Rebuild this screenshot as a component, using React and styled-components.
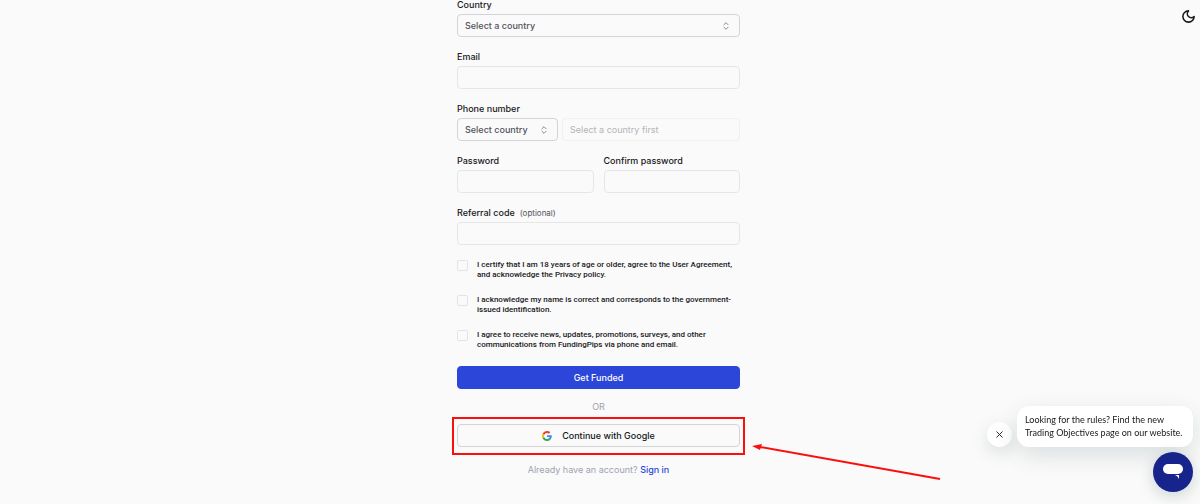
import React, { useState } from 'react';
import styled, { createGlobalStyle } from 'styled-components';
import { ChevronsUpDown, X } from 'lucide-react';

const GlobalStyle = createGlobalStyle`
  * {
    box-sizing: border-box;
  }

  body {
    margin: 0;
    background-color: #fafafa;
    color: #18181b;
    font-family: 'Inter', sans-serif;
    font-size: 9px;
  }

  button,
  input,
  select {
    margin: 0;
    font-family: inherit;
    font-size: inherit;
  }
`;

const Page = styled.main`
  display: flex;
  justify-content: center;
  min-height: 100vh;
  padding-right: 3px;
  overflow: hidden;
`;

const Form = styled.form`
  display: flex;
  flex-direction: column;
  width: 100%;
  max-width: 283px;
`;

const Fields = styled.div`
  display: flex;
  flex-direction: column;
  gap: 15px;
  margin-bottom: 16px;
`;

const Field = styled.div`
  display: flex;
  flex-direction: column;
  gap: 5px;
  min-width: 0;
`;

const Columns = styled.div`
  display: grid;
  grid-template-columns: 1fr 1fr;
  gap: 10px;
`;

const PhoneRow = styled.div`
  display: grid;
  grid-template-columns: 101px 1fr;
  gap: 4px;
`;

const Label = styled.label`
  line-height: 9px;
  font-weight: 500;
`;

const Optional = styled.span`
  margin-left: 5px;
  font-size: 8px;
  line-height: 8px;
  font-weight: 400;
  color: #52525b;
`;

const Input = styled.input`
  width: 100%;
  height: 23px;
  padding: 0 7px;
  border: 1px solid #e6e6e8;
  border-radius: 4px;
  background-color: transparent;

  &:disabled {
    border-color: #f0f0f1;
  }

  &::placeholder {
    color: #b4b4b8;
    opacity: 1;
  }
`;

const SelectBox = styled.div`
  display: grid;
  align-items: center;

  & > * {
    grid-area: 1 / 1;
  }

  svg {
    justify-self: end;
    margin-right: 9px;
    color: #71717a;
    pointer-events: none;
  }
`;

const Select = styled.select`
  width: 100%;
  height: 23px;
  padding: 0 20px 0 7px;
  border: 1px solid #d4d4d8;
  border-radius: 4px;
  background-color: transparent;
  color: #52525b;
  font-weight: 500;
  appearance: none;
`;

const CheckRow = styled.label`
  display: flex;
  align-items: flex-start;
  gap: 9px;
  font-family: 'Roboto', sans-serif;
  font-size: 8px;
  line-height: 10px;
  font-weight: 500;
`;

const Checkbox = styled.input`
  flex: none;
  width: 11px;
  height: 11px;
  border: 1px solid #e4e4e7;
  border-radius: 2px;
  appearance: none;

  &:checked {
    background-color: #2b46d9;
  }
`;

const Button = styled.button`
  display: flex;
  align-items: center;
  justify-content: center;
  gap: 10px;
  width: 100%;
  height: 23px;
  padding: 0;
  border: 1px solid ${({ $primary }) => ($primary ? '#2b46d9' : '#d4d4d8')};
  border-radius: 4px;
  background-color: ${({ $primary }) => ($primary ? '#2b46d9' : 'transparent')};
  color: ${({ $primary }) => ($primary ? '#ffffff' : '#18181b')};
  font-weight: 500;
  cursor: pointer;
`;

const Or = styled.p`
  margin: 12px 0;
  line-height: 11px;
  text-align: center;
  color: #a1a1aa;
`;

const GoogleArea = styled.div`
  position: relative;
`;

const Highlight = styled.div`
  position: absolute;
  inset: -7px -5px -8px;
  border: 2px solid #fa0f0f;
  pointer-events: none;
`;

const Arrow = styled.svg`
  position: absolute;
  top: 16px;
  left: calc(100% + 12px);
  pointer-events: none;
`;

const SignIn = styled.p`
  margin: 17px 0 0;
  line-height: 11px;
  text-align: center;
  color: #9ca3af;

  a {
    color: #2b46d9;
    font-weight: 500;
    text-decoration: none;
  }
`;

const ThemeButton = styled.button`
  position: fixed;
  top: 9px;
  right: 4px;
  display: flex;
  padding: 0;
  border: none;
  background: none;
  color: #18181b;
`;

const Chat = styled.aside`
  position: fixed;
  right: 7px;
  bottom: 12px;
  display: flex;
  flex-direction: column;
  align-items: flex-end;
  gap: 5px;
`;

const ChatRow = styled.div`
  display: flex;
  align-items: flex-end;
  gap: 5px;
`;

const Bubble = styled.p`
  margin: 0;
  width: 176px;
  padding: 7px 8px 8px;
  border-radius: 12px;
  background-color: #ffffff;
  box-shadow: 0 8px 24px rgba(20, 60, 60, 0.14);
  font-family: 'Lato', sans-serif;
  font-size: 9px;
  line-height: 13px;
  white-space: nowrap;
`;

const CloseButton = styled.button`
  display: flex;
  align-items: center;
  justify-content: center;
  width: 25px;
  height: 25px;
  padding: 0;
  border: none;
  border-radius: 50%;
  background-color: #ffffff;
  box-shadow: 0 6px 18px rgba(20, 60, 60, 0.14);
  color: #18181b;
`;

const ChatButton = styled.button`
  display: flex;
  align-items: center;
  justify-content: center;
  width: 40px;
  height: 40px;
  padding: 0;
  border: none;
  border-radius: 50%;
  background-color: #17248c;
  box-shadow: 0 4px 16px rgba(20, 60, 60, 0.2);
`;

const agreements = [
  'I certify that I am 18 years of age or older, agree to the User Agreement, and acknowledge the Privacy policy.',
  'I acknowledge my name is correct and corresponds to the government-issued identification.',
  'I agree to receive news, updates, promotions, surveys, and other communications from FundingPips via phone and email.',
];

const GoogleLogo = () => (
  <svg width="10" height="10" viewBox="0 0 48 48" aria-hidden="true">
    <path fill="#EA4335" d="M24 9.5c3.54 0 6.71 1.22 9.21 3.6l6.85-6.85C35.9 2.38 30.47 0 24 0 14.62 0 6.51 5.38 2.56 13.22l7.98 6.19C12.43 13.72 17.74 9.5 24 9.5z" />
    <path fill="#4285F4" d="M46.98 24.55c0-1.57-.15-3.09-.38-4.55H24v9.02h12.94c-.58 2.96-2.26 5.48-4.78 7.18l7.73 6c4.51-4.18 7.09-10.36 7.09-17.65z" />
    <path fill="#FBBC05" d="M10.53 28.59A14.5 14.5 0 0 1 9.77 24c0-1.6.27-3.14.76-4.59l-7.98-6.19A23.9 23.9 0 0 0 0 24c0 3.88.92 7.54 2.56 10.78l7.97-6.19z" />
    <path fill="#34A853" d="M24 48c6.48 0 11.93-2.13 15.89-5.81l-7.73-6c-2.15 1.45-4.92 2.3-8.16 2.3-6.26 0-11.57-4.22-13.47-9.91l-7.98 6.19C6.51 42.62 14.62 48 24 48z" />
  </svg>
);

const MoonIcon = () => (
  <svg width="15" height="15" viewBox="0 0 24 24" fill="none" stroke="currentColor" strokeWidth="2.5" strokeLinejoin="round" aria-hidden="true">
    <path d="M12 3a6 6 0 0 0 9 9 9 9 0 1 1-9-9Z" />
  </svg>
);

const App = () => {
  const [dialogOpen, setDialogOpen] = useState(true);

  return (
    <>
      <GlobalStyle />
      <Page>
        <Form onSubmit={(e) => e.preventDefault()}>
          <Fields>
            <Field>
              <Label htmlFor="country">Country</Label>
              <SelectBox>
                <Select id="country" name="country">
                  <option>Select a country</option>
                </Select>
                <ChevronsUpDown size={10} />
              </SelectBox>
            </Field>
            <Field>
              <Label htmlFor="email">Email</Label>
              <Input type="email" id="email" name="email" />
            </Field>
            <Field>
              <Label htmlFor="phone">Phone number</Label>
              <PhoneRow>
                <SelectBox>
                  <Select name="phoneCountry" aria-label="Phone country">
                    <option>Select country</option>
                  </Select>
                  <ChevronsUpDown size={10} />
                </SelectBox>
                <Input type="tel" id="phone" name="phone" placeholder="Select a country first" disabled />
              </PhoneRow>
            </Field>
            <Columns>
              <Field>
                <Label htmlFor="password">Password</Label>
                <Input type="password" id="password" name="password" />
              </Field>
              <Field>
                <Label htmlFor="confirm">Confirm password</Label>
                <Input type="password" id="confirm" name="confirm" />
              </Field>
            </Columns>
            <Field>
              <Label htmlFor="referral">
                Referral code<Optional>(optional)</Optional>
              </Label>
              <Input type="text" id="referral" name="referral" />
            </Field>
            {agreements.map((text) => (
              <CheckRow key={text}>
                <Checkbox type="checkbox" />
                <span>{text}</span>
              </CheckRow>
            ))}
          </Fields>

          <Button type="submit" $primary>Get Funded</Button>
          <Or>OR</Or>
          <GoogleArea>
            <Button type="button">
              <GoogleLogo />
              Continue with Google
            </Button>
            <Highlight />
            <Arrow width="190" height="42" viewBox="0 0 190 42" aria-hidden="true">
              <path d="M8 7 L188 39" stroke="#fa0f0f" strokeWidth="2" />
              <path d="M0 6 L10 4 L8 10 Z" fill="#fa0f0f" />
            </Arrow>
          </GoogleArea>
          <SignIn>
            Already have an account? <a href="#signin">Sign in</a>
          </SignIn>
        </Form>
      </Page>

      <ThemeButton type="button" aria-label="Toggle theme">
        <MoonIcon />
      </ThemeButton>

      <Chat>
        {dialogOpen && (
          <ChatRow>
            <CloseButton type="button" aria-label="Close" onClick={() => setDialogOpen(false)}>
              <X size={11} />
            </CloseButton>
            <Bubble>
              Looking for the rules? Find the new
              <br />
              Trading Objectives page on our website.
            </Bubble>
          </ChatRow>
        )}
        <ChatButton type="button" aria-label="Open chat">
          <svg width="20" height="16" viewBox="0 0 20 16" aria-hidden="true">
            <rect x="0" y="0" width="20" height="10" rx="5" fill="#ffffff" />
            <path d="M12 11 H16 V15 Q15 12 12 11 Z" fill="#ffffff" />
          </svg>
        </ChatButton>
      </Chat>
    </>
  );
};

export default App;
